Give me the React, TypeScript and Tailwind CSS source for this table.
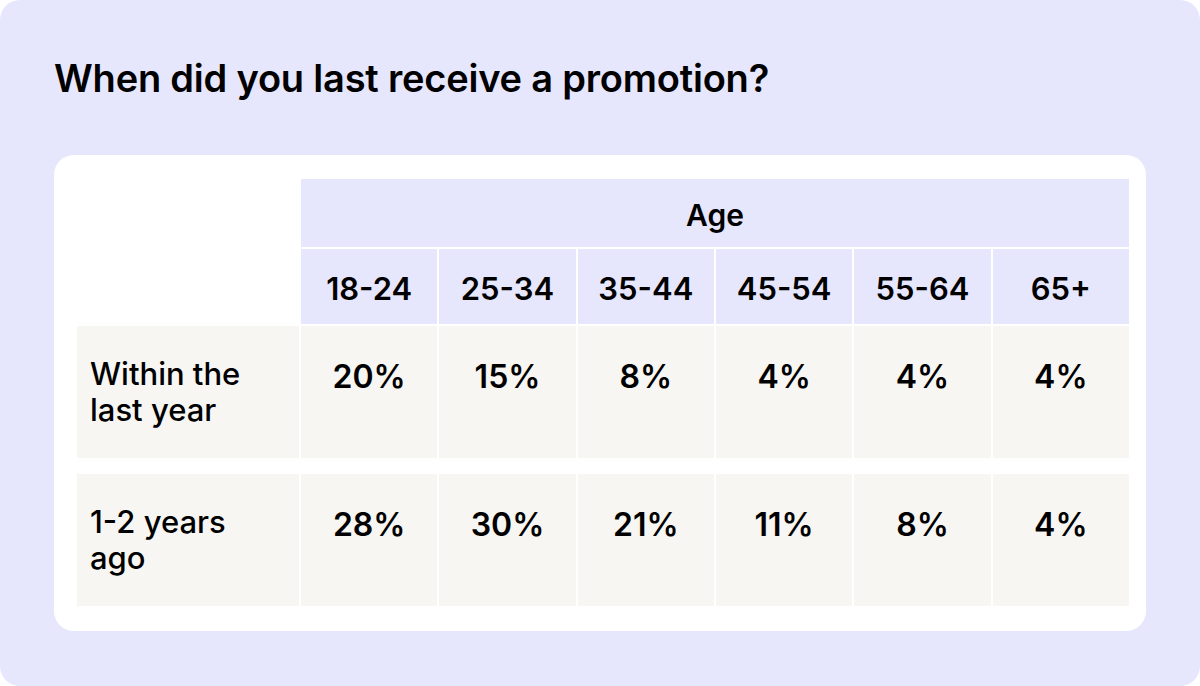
import React from "react";

const ageGroups = ["18-24", "25-34", "35-44", "45-54", "55-64", "65+"];

const rows = [
  { label: ["Within the", "last year"], values: ["20%", "15%", "8%", "4%", "4%", "4%"] },
  { label: ["1-2 years", "ago"], values: ["28%", "30%", "21%", "11%", "8%", "4%"] },
];

const font = { fontFamily: "Inter, 'Liberation Sans', sans-serif" };

export default function App() {
  return (
    <div className="w-[1200px] h-[686px] bg-white" style={font}>
      <div className="h-full rounded-[20px] bg-[#e6e6fc] px-[54px] pt-[56px] text-black">
        <h1 className="text-[38px] leading-[44px] font-semibold tracking-[-0.2px]">
          When did you last receive a promotion?
        </h1>

        <div className="mt-[55px] rounded-[20px] bg-white pl-[23px] pr-[17px] pt-[24px] pb-[25px]">
          {/* Age header */}
          <div className="flex gap-[2px]">
            <div className="w-[222px] shrink-0" />
            <div className="flex-1 h-[68px] bg-[#e6e6fc] flex items-center justify-center pt-[4px] text-[30px] font-semibold">
              Age
            </div>
          </div>

          {/* Age groups */}
          <div className="flex gap-[2px] mt-[2px]">
            <div className="w-[222px] shrink-0" />
            {ageGroups.map((g) => (
              <div
                key={g}
                className="flex-1 h-[75px] bg-[#e6e6fc] flex items-center justify-center pt-[6px] text-[31px] font-semibold"
              >
                {g}
              </div>
            ))}
          </div>

          {/* Data rows */}
          {rows.map((row, i) => (
            <div key={i} className={`flex gap-[2px] ${i === 0 ? "mt-[2px]" : "mt-[16px]"}`}>
              <div className="w-[222px] shrink-0 h-[132px] bg-[#f7f6f3] pl-[13px] pt-[33px] text-[31px] font-medium">
                <div className="h-[36px] leading-[30px]">{row.label[0]}</div>
                <div className="h-[36px] leading-[30px]">{row.label[1]}</div>
              </div>
              {row.values.map((v, j) => (
                <div
                  key={j}
                  className="flex-1 h-[132px] bg-[#f7f6f3] pt-[33px] text-center text-[32px] leading-[35px] font-semibold"
                >
                  {v}
                </div>
              ))}
            </div>
          ))}
        </div>
      </div>
    </div>
  );
}
